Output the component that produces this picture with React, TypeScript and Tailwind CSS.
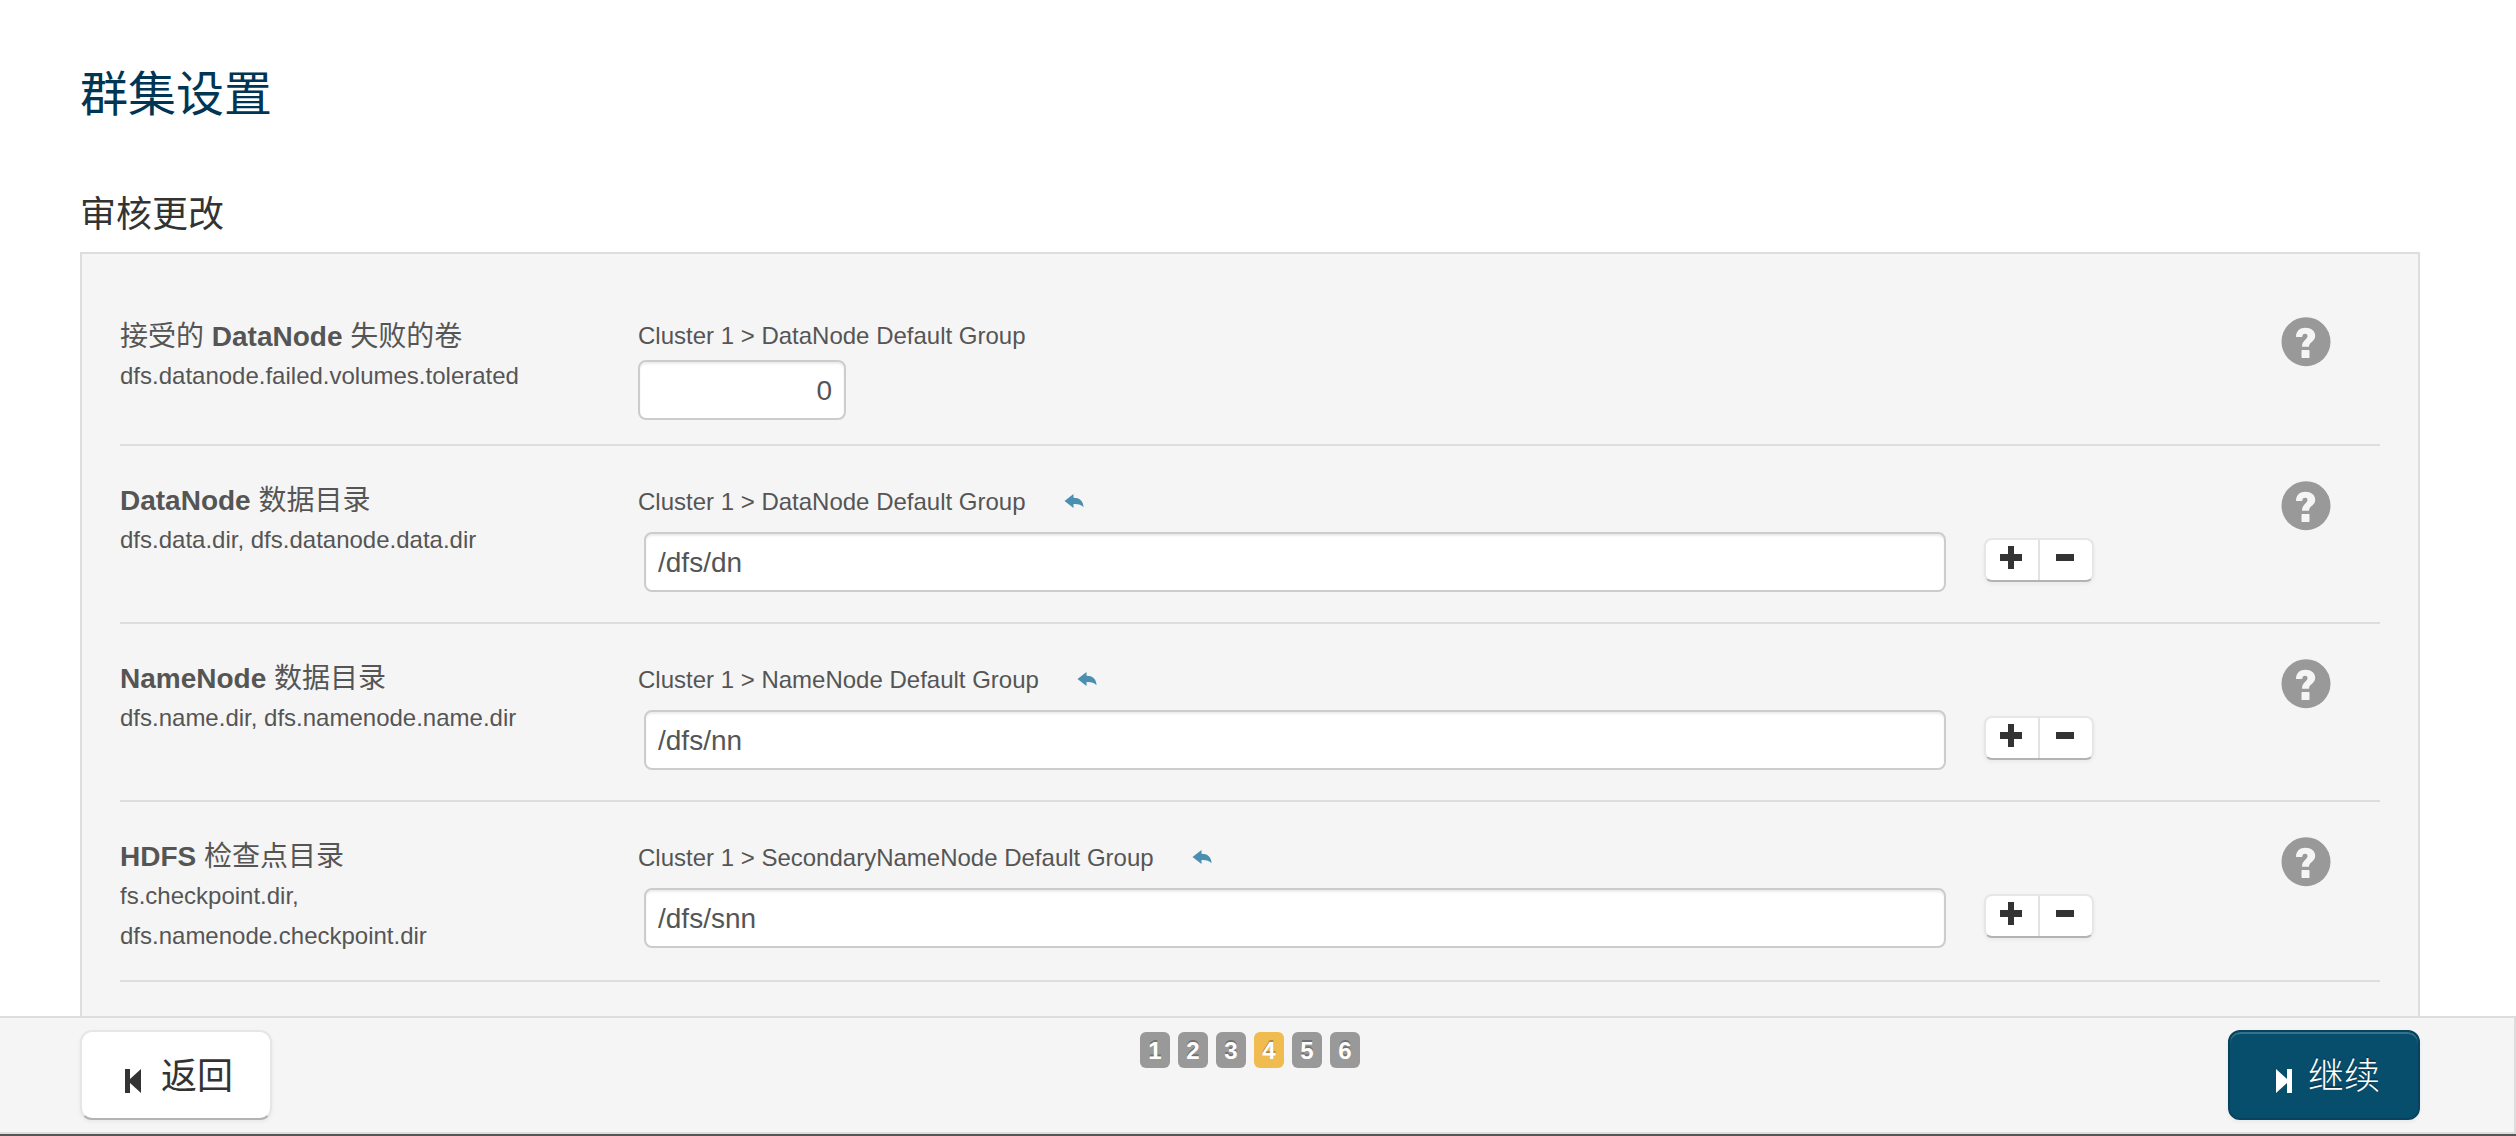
import { useState } from "react";

interface Setting {
  id: string;
  title: string;
  properties: string;
  group: string;
  value: string;
  list: boolean;
}

const settings: Setting[] = [
  {
    id: "failed-volumes",
    title: "接受的 DataNode 失败的卷",
    properties: "dfs.datanode.failed.volumes.tolerated",
    group: "DataNode Default Group",
    value: "0",
    list: false,
  },
  {
    id: "datanode-dir",
    title: "DataNode 数据目录",
    properties: "dfs.data.dir, dfs.datanode.data.dir",
    group: "DataNode Default Group",
    value: "/dfs/dn",
    list: true,
  },
  {
    id: "namenode-dir",
    title: "NameNode 数据目录",
    properties: "dfs.name.dir, dfs.namenode.name.dir",
    group: "NameNode Default Group",
    value: "/dfs/nn",
    list: true,
  },
  {
    id: "checkpoint-dir",
    title: "HDFS 检查点目录",
    properties: "fs.checkpoint.dir, dfs.namenode.checkpoint.dir",
    group: "SecondaryNameNode Default Group",
    value: "/dfs/snn",
    list: true,
  },
];

const steps = [1, 2, 3, 4, 5, 6];

function ReplyIcon() {
  return (
    <svg viewBox="0 0 20 16" className="h-4 w-5" fill="currentColor" aria-hidden="true">
      <path d="M.5 7 9.500 0v3.700C15.500 3.700 19.500 7 19.500 13.200 17 10.300 14 9.800 9.500 10v4z" />
    </svg>
  );
}

function HelpIcon() {
  return (
    <svg viewBox="-1 -1 51 51" className="size-[51px]" aria-hidden="true">
      <circle cx="25" cy="24.700" r="24.500" fill="#999" />
      <path
        fill="#f5f5f5"
        d="M15 20C15 14 19 10.800 24.500 10.800c5.500 0 9.700 3 9.700 8 0 6-6.200 6-6.200 11h-7c0-6.500 5.500-7.500 5.500-10.800 0-1.500-1-2.300-2.300-2.300-1.800 0-3 1.200-3 3.300zM21.200 33q-.7 0-.7.700v6.600q0 .7.700.7h6.600q.7 0 .7-.7v-6.600q0-.7-.7-.7z"
      />
    </svg>
  );
}

function SettingRow({ setting }: { setting: Setting }) {
  const [value, setValue] = useState(setting.value);

  return (
    <div className="flex border-b-2 border-[#ddd] pt-[34px] pb-6">
      <div className="w-[518px] shrink-0 pr-28">
        <h3 className="pt-0.5 text-[28px] leading-[38px] font-bold">
          {setting.title.split(" ").map((part, i) => (
            <span key={i} className={/^[A-Za-z]/.test(part) ? "" : "font-normal"}>
              {i > 0 && " "}
              {part}
            </span>
          ))}
        </h3>
        <p className="text-2xl leading-10">{setting.properties}</p>
      </div>

      <div className="min-w-0 flex-1">
        <div className={setting.list ? "flex items-center pt-0.5" : "flex items-center"}>
          <label htmlFor={setting.id} className="text-2xl leading-10">
            Cluster 1 &gt; {setting.group}
          </label>
          {setting.list && (
            <button type="button" aria-label="重置" className="ml-[38px] text-[#4a8fb0]">
              <ReplyIcon />
            </button>
          )}
        </div>

        {setting.list ? (
          <div className="mt-2.5 mb-1.5 ml-1.5 flex items-center gap-[38px] pr-[186px]">
            <input
              id={setting.id}
              type="text"
              value={value}
              onChange={(e) => setValue(e.target.value)}
              className="h-[60px] min-w-0 flex-1 rounded-lg border-2 border-[#ccc] bg-white px-3 pt-0.5 text-[28px] shadow-[inset_0_2px_2px_rgba(0,0,0,0.075)]"
            />
            <div className="mb-1 flex h-11 w-[110px] divide-x-2 divide-[#e2e2e2] rounded-lg border-2 border-[#e6e6e6] border-b-[#b3b3b3] bg-white text-[#333] shadow-[0_2px_4px_rgba(0,0,0,0.05)]">
              <button type="button" aria-label="添加" className="flex flex-1 justify-center pt-1.5 pr-0.5">
                <svg viewBox="0 0 24 24" className="size-6" fill="currentColor" aria-hidden="true">
                  <path d="M9 0h6v8h8v7h-8v8H9v-8H1V8h8z" />
                </svg>
              </button>
              <button type="button" aria-label="删除" className="flex flex-1 justify-center pt-1.5 pr-0.5">
                <svg viewBox="0 0 24 24" className="size-6" fill="currentColor" aria-hidden="true">
                  <path d="M3 8h18v7H3z" />
                </svg>
              </button>
            </div>
          </div>
        ) : (
          <input
            id={setting.id}
            type="text"
            value={value}
            onChange={(e) => setValue(e.target.value)}
            className="mt-1 block h-[60px] w-52 rounded-lg border-2 border-[#ccc] bg-white px-3 pt-0.5 text-right text-[28px] shadow-[inset_0_2px_2px_rgba(0,0,0,0.075)]"
          />
        )}
      </div>

      <div className="w-[100px] shrink-0">
        <button type="button" aria-label="帮助" className="block">
          <HelpIcon />
        </button>
      </div>
    </div>
  );
}

export default function App() {
  return (
    <div className="flex h-screen flex-col bg-white font-['Liberation_Sans','Noto_Sans_CJK_SC',sans-serif] text-[#555]">
      <main className="flex min-h-0 flex-1 flex-col overflow-hidden pt-[65px] pr-24 pl-20">
        <h1 className="text-[48px] leading-[60px] font-normal text-[#003553]">群集设置</h1>
        <h2 className="mt-[65px] mb-3 text-4xl leading-[50px] text-[#333]">审核更改</h2>

        <section className="flex-1 border-2 border-b-0 border-[#ddd] bg-[#f5f5f5] px-[38px] pt-7">
          {settings.map((setting) => (
            <SettingRow key={setting.id} setting={setting} />
          ))}
        </section>
      </main>

      <footer className="shrink-0 border-b-2 border-[#555]">
        <div className="flex items-start justify-between border-2 border-l-0 border-[#ddd] bg-[#f5f5f5] pt-3 pr-[94px] pb-3 pl-20">
          <div className="flex flex-1">
            <button
              type="button"
              className="flex h-[90px] w-48 items-center justify-center rounded-xl border-2 border-[#e6e6e6] border-b-[#b3b3b3] bg-white pt-1 pl-1.5 text-4xl text-[#333] shadow-[0_2px_4px_rgba(0,0,0,0.05)]"
            >
              <svg viewBox="0 0 16 24" className="mt-2 mr-5 h-6 w-4" fill="currentColor" aria-hidden="true">
                <path d="M0 0h5v10L16 0v24L5 14v10H0z" />
              </svg>
              返回
            </button>
          </div>

          <ol className="mt-0.5 flex gap-2">
            {steps.map((step) => (
              <li
                key={step}
                className={`flex h-9 w-[30px] items-center justify-center rounded-md pt-0.5 text-2xl font-bold text-white [text-shadow:0_-2px_0_rgba(0,0,0,0.25)] ${
                  step === 4 ? "bg-[#f0bb4f]" : "bg-[#999]"
                }`}
              >
                {step}
              </li>
            ))}
          </ol>

          <div className="flex flex-1 justify-end">
            <button
              type="button"
              className="flex h-[90px] w-48 items-center justify-center rounded-xl border-2 border-[#07435f] bg-[#074e6d] pt-1 pl-2 text-4xl font-light text-white shadow-[inset_0_2px_0_rgba(255,255,255,0.2),0_2px_4px_rgba(0,0,0,0.05)] [text-shadow:0_-2px_0_rgba(0,0,0,0.25)]"
            >
              <svg viewBox="0 0 16 24" className="mt-2 mr-4 h-6 w-4" fill="currentColor" aria-hidden="true">
                <path d="M16 0h-5v10L0 0v24l11-10v10h5z" />
              </svg>
              继续
            </button>
          </div>
        </div>
      </footer>
    </div>
  );
}
